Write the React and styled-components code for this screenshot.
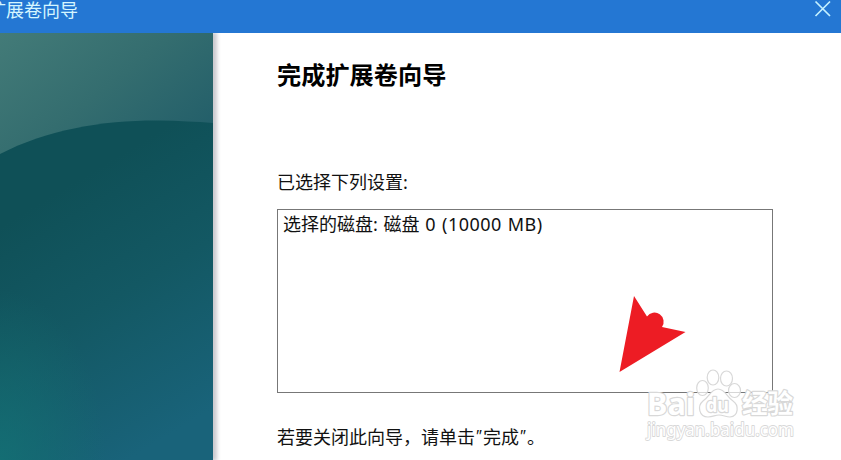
import React from "react";
import styled, { createGlobalStyle } from "styled-components";

const App = () => {
  return (
    <>
      <GlobalStyle />
      <Window>
        <TitleBar>
          <Title>扩展卷向导</Title>
          <CloseButton aria-label="关闭">
            <svg width="18" height="18" viewBox="0 0 18 18">
              <path d="M1.5 1.5L16 16M16 1.5L1.5 16" stroke="#c5f1ff" strokeWidth="1.7" />
            </svg>
          </CloseButton>
        </TitleBar>
        <Body>
          <Banner>
            <BannerArt />
          </Banner>
          <Content>
            <Heading>完成扩展卷向导</Heading>
            <Label>已选择下列设置:</Label>
            <Settings>
              选择的磁盘: 磁盘 <Size>0 (10000 MB)</Size>
            </Settings>
            <Hint>
              若要关闭此向导，请单击<Quote>"</Quote>完成<Quote>"</Quote>。
            </Hint>
          </Content>
        </Body>
        <Pointer width="68" height="78" viewBox="0 0 68 78">
          <path d="M16 1L29 21.5A9 9 0 0 1 44 32L67.500 37L1.500 77Z" fill="#ed1c24" />
        </Pointer>
        <Watermark />
      </Window>
    </>
  );
};

const BannerArt = () => (
  <svg width="213" height="427" viewBox="0 0 213 427">
    <defs>
      <linearGradient id="sky" x1="0" y1="0" x2="1" y2="0.8">
        <stop offset="0" stopColor="#437b78" />
        <stop offset="0.5" stopColor="#346d6f" />
        <stop offset="1" stopColor="#215d69" />
      </linearGradient>
      <linearGradient id="hill" x1="0.3" y1="0.2" x2="0.6" y2="1">
        <stop offset="0" stopColor="#0f5057" />
        <stop offset="0.45" stopColor="#135863" />
        <stop offset="1" stopColor="#19637a" />
      </linearGradient>
      <radialGradient id="glow" cx="0" cy="1" r="0.5">
        <stop offset="0" stopColor="#137174" stopOpacity="0.8" />
        <stop offset="1" stopColor="#137070" stopOpacity="0" />
      </radialGradient>
    </defs>
    <rect width="213" height="135" fill="url(#sky)" />
    <path d="M0 121C48 96 105 87 160 87.500Q188 88 213 90V427H0Z" fill="url(#hill)" />
    <path d="M0 121C48 96 105 87 160 87.500Q188 88 213 90V427H0Z" fill="url(#glow)" />
  </svg>
);

const Watermark = () => (
  <Mark width="166" height="78" viewBox="636 366 166 78">
    <g fill="#fff" stroke="#d8d8d8" strokeWidth="2.4" strokeLinejoin="round" paintOrder="stroke">
      <text x="647" y="415" fontSize="31" fontWeight="700" textLength="48" lengthAdjust="spacingAndGlyphs">
        Bai
      </text>
      <g strokeWidth="1.2" paintOrder="normal" fillOpacity="0.7">
        <ellipse cx="702.500" cy="388" rx="5.800" ry="7.500" />
        <ellipse cx="713" cy="377.500" rx="5.800" ry="7.500" />
        <ellipse cx="726.500" cy="378.500" rx="6" ry="7.500" />
        <ellipse cx="734.500" cy="390.500" rx="6" ry="7" />
        <path
          d="M718 389C711 389 709 397 703 401C697 406 699 417 708 417C713 417 715 415 719 415C723 415 726 417 730 417C739 416 739 405 733 401C727 397 725 389 718 389Z"
          fillOpacity="1"
        />
      </g>
      <text x="706" y="412" fontSize="19" fontWeight="700" textLength="23" lengthAdjust="spacingAndGlyphs">
        du
      </text>
      <text x="742" y="413" fontSize="26" fontWeight="700" textLength="51" lengthAdjust="spacingAndGlyphs">
        经验
      </text>
      <text x="647" y="436" fontSize="18" strokeWidth="1.8" textLength="147" lengthAdjust="spacingAndGlyphs">
        jingyan.baidu.com
      </text>
    </g>
  </Mark>
);

const GlobalStyle = createGlobalStyle`
  body {
    margin: 0;
    overflow: hidden;
    background: #fff;
  }
`;

const Window = styled.div`
  position: relative;
  display: flex;
  flex-direction: column;
  width: 841px;
  height: 460px;
  overflow: hidden;
  background: #fff;
  color: #111;
  font-family: "Noto Sans", "Noto Sans CJK SC", sans-serif;
  font-size: 18px;
`;

const TitleBar = styled.header`
  display: flex;
  justify-content: space-between;
  flex: none;
  height: 33px;
  background: #2477d3;
`;

const Title = styled.span`
  margin-left: -12px;
  color: #d5f6ff;
  line-height: 20px;
  white-space: nowrap;
`;

const CloseButton = styled.button`
  display: flex;
  width: 27px;
  height: 20px;
  padding: 0;
  border: 0;
  background: none;
`;

const Body = styled.div`
  display: flex;
  flex: 1;
  min-height: 0;
`;

const Banner = styled.aside`
  flex: none;
  width: 213px;
  box-shadow: 3px 0 4px 1px #cbcacf;
  clip-path: inset(0 -12px 0 0);

  svg {
    display: block;
  }
`;

const Content = styled.main`
  display: flex;
  flex-direction: column;
  flex: 1;
  padding: 25px 68px 0 64px;
  white-space: nowrap;
`;

const Heading = styled.h1`
  margin: 0;
  color: #000;
  font-size: 24.2px;
  font-weight: 700;
  line-height: 34px;
`;

const Label = styled.p`
  margin: 78px 0 0;
  line-height: 24px;
`;

const Settings = styled.div`
  box-sizing: border-box;
  height: 184px;
  margin-top: 15px;
  padding: 2px 5px;
  border: 1px solid #777;
  line-height: 24px;
  word-spacing: 1px;
`;

const Size = styled.span`
  letter-spacing: 0.45px;
`;

const Hint = styled.p`
  margin: 32px 0 0;
  line-height: 24px;
`;

const Quote = styled.span`
  display: inline-block;
  width: 8px;
  font-size: 16px;
  font-style: italic;
  line-height: 1;
  vertical-align: 2px;
`;

const Pointer = styled.svg`
  position: absolute;
  left: 618px;
  top: 295px;
`;

const Mark = styled.svg`
  position: absolute;
  left: 636px;
  top: 366px;
`;

export default App;
